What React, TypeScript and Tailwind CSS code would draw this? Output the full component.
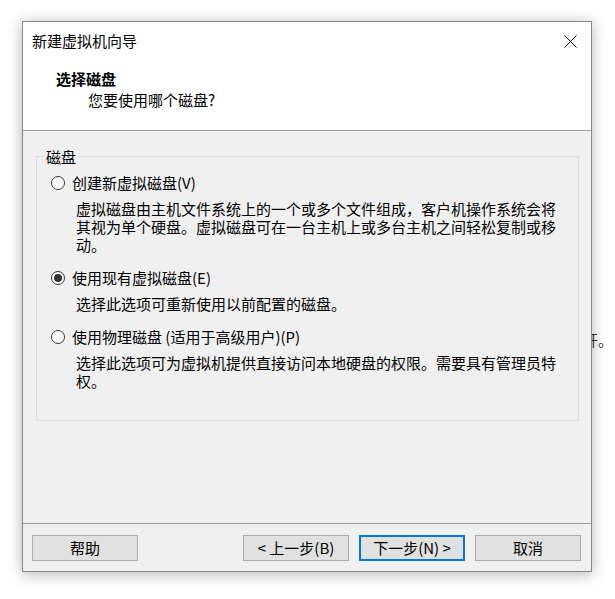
import React from "react";

function Radio({ checked }: { checked?: boolean }) {
  return (
    <span className="flex h-[14px] w-[14px] shrink-0 items-center justify-center rounded-full border border-[#333333] bg-white">
      {checked && <span className="h-[8px] w-[8px] rounded-full bg-[#333333]" />}
    </span>
  );
}

function Option({
  label,
  lines,
  checked,
  first,
}: {
  label: string;
  lines: string[];
  checked?: boolean;
  first?: boolean;
}) {
  return (
    <div className={first ? "" : "mt-[14px]"}>
      <div className="flex h-5 items-center gap-[7px] pl-[14px] leading-5">
        <Radio checked={checked} />
        <span>{label}</span>
      </div>
      <div className="mt-[7px] pl-[39px] leading-[18px]">
        {lines.map((l, i) => (
          <div key={i} className="whitespace-nowrap">
            {l}
          </div>
        ))}
      </div>
    </div>
  );
}

function Button({ children, focused }: { children: React.ReactNode; focused?: boolean }) {
  return (
    <button
      className={
        "flex h-[26px] w-[106px] items-center justify-center bg-[#e1e1e1] text-[15px] leading-5 text-black " +
        (focused ? "border-2 border-[#0078d7]" : "border border-[#adadad]")
      }
    >
      {children}
    </button>
  );
}

export default function App() {
  return (
    <div className="relative h-[599px] w-[615px] overflow-hidden bg-white pl-[22px] pt-[21px] font-['Noto_Sans_CJK_SC',sans-serif] text-[15px] text-black">
      <span className="absolute left-[583px] top-[330px] z-0 leading-5 text-[#333333]">开。</span>
      <div className="relative z-10 flex h-[551px] w-[570px] flex-col border border-[#888888] bg-[#f0f0f0] shadow-[0_2px_14px_rgba(0,0,0,0.3)]">
        {/* header */}
        <div className="h-[109px] shrink-0 border-b border-[#a0a0a0] bg-white pl-[9px] pt-[9px]">
          <div className="flex h-5 items-center justify-between pr-[14px] leading-5">
            <span>新建虚拟机向导</span>
            <svg width="13" height="13" viewBox="0 0 13 13">
              <path d="M0.5 0.5 L12.5 12.5 M12.5 0.5 L0.5 12.5" stroke="#000" strokeWidth="1" fill="none" />
            </svg>
          </div>
          <div className="mt-[18px] pl-[24px] font-bold leading-5">选择磁盘</div>
          <div className="mt-px pl-[56px] leading-5">您要使用哪个磁盘?</div>
        </div>
        {/* body */}
        <div className="flex-1 pl-[13px] pt-[25px]">
          <div className="relative h-[265px] w-[543px] border border-[#dcdcdc] pt-[16px]">
            <span className="absolute left-[7px] top-[-10px] bg-[#f0f0f0] px-[2px] leading-5">磁盘</span>
            <Option
              first
              label="创建新虚拟磁盘(V)"
              lines={[
                "虚拟磁盘由主机文件系统上的一个或多个文件组成，客户机操作系统会将",
                "其视为单个硬盘。虚拟磁盘可在一台主机上或多台主机之间轻松复制或移",
                "动。",
              ]}
            />
            <Option checked label="使用现有虚拟磁盘(E)" lines={["选择此选项可重新使用以前配置的磁盘。"]} />
            <Option
              label="使用物理磁盘 (适用于高级用户)(P)"
              lines={["选择此选项可为虚拟机提供直接访问本地硬盘的权限。需要具有管理员特", "权。"]}
            />
          </div>
        </div>
        {/* footer */}
        <div className="flex h-[48px] shrink-0 items-start border-t border-[#a0a0a0] pl-[9px] pr-[10px] pt-[11px]">
          <Button>帮助</Button>
          <div className="flex-1" />
          <div className="flex gap-[10px]">
            <Button>&lt; 上一步(B)</Button>
            <Button focused>下一步(N) &gt;</Button>
            <Button>取消</Button>
          </div>
        </div>
      </div>
    </div>
  );
}
